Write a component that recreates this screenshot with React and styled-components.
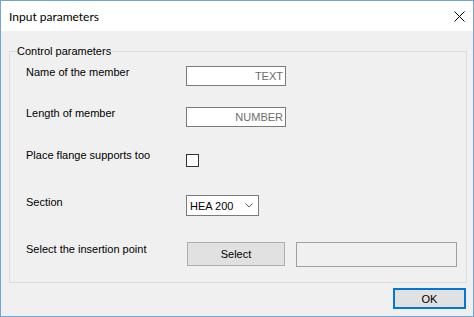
import React from "react";
import styled, { createGlobalStyle } from "styled-components";

const Global = createGlobalStyle`
  html, body { margin: 0; padding: 0; background: #ffffff; }
  body { font-family: "Liberation Sans", Arial, sans-serif; font-size: 11px; color: #000; }
  * { box-sizing: border-box; }
`;

const Window = styled.div`
  width: 474px;
  height: 317px;
  border: 1px solid #6ea6dc;
  background: #f0f0f0;
  display: flex;
  flex-direction: column;
`;

const TitleBar = styled.div`
  height: 30px;
  flex: none;
  background: #ffffff;
  display: flex;
  align-items: center;
  justify-content: space-between;
  padding: 0 8px 0 8px;
`;

const Title = styled.span`
  font-family: Lato, "Open Sans", sans-serif;
  font-size: 12px;
  color: #000;
`;

const CloseIcon = styled.svg`
  width: 11px;
  height: 11px;
  display: block;
`;

const Body = styled.div`
  flex: 1;
  display: flex;
  flex-direction: column;
  padding: 14px 6px 0 8px;
`;

const Group = styled.fieldset`
  margin: 0;
  padding: 0 6px 15px 7px;
  border: 1px solid #dcdcdc;
  min-width: 0;
`;

const Legend = styled.legend`
  padding: 0;
  font-size: 11px;
  line-height: 13px;
  color: #000;
`;

const FormGrid = styled.div`
  display: grid;
  grid-template-columns: 160px 1fr;
  grid-template-rows: 41px 42px 46px 47px 25px;
  align-items: start;
  margin: 8px 0 0 9px;
`;

const Label = styled.div`
  line-height: 13px;
  white-space: nowrap;
  margin-top: ${(p) => p.$offset || 0}px;
`;

const Cell = styled.div`
  display: flex;
  align-items: flex-start;
  gap: 11px;
`;

const TextBox = styled.input`
  width: 100px;
  height: 20px;
  border: 1px solid #7a7a7a;
  background: #ffffff;
  padding: 0 2px 0 2px;
  text-align: right;
  font-family: "Liberation Sans", Arial, sans-serif;
  font-size: 11px;
  color: #6d6d6d;
  outline: none;
  margin: 0;
`;

const CheckBox = styled.span`
  display: block;
  width: 13px;
  height: 13px;
  border: 1px solid #333333;
  background: #ffffff;
  margin-top: 5px;
`;

const Combo = styled.div`
  width: 73px;
  height: 21px;
  border: 1px solid #7a7a7a;
  background: #ffffff;
  display: flex;
  align-items: center;
  justify-content: space-between;
  padding: 0 5px 0 3px;
  font-size: 11px;
  color: #000;
`;

const Chevron = styled.svg`
  width: 8px;
  height: 5px;
  display: block;
`;

const Button = styled.button`
  width: ${(p) => p.$w}px;
  height: ${(p) => p.$h}px;
  margin: 0 0 0 ${(p) => p.$ml || 0}px;
  padding: 0;
  background: #e1e1e1;
  border: ${(p) => (p.$default ? "2px solid #0078d7" : "1px solid #adadad")};
  font-family: "Liberation Sans", Arial, sans-serif;
  font-size: 11px;
  color: #000;
  display: flex;
  align-items: center;
  justify-content: center;
`;

const ReadOnlyField = styled.div`
  width: 161px;
  height: 25px;
  border: 1px solid #a0a0a0;
  background: #f0f0f0;
`;

const Footer = styled.div`
  display: flex;
  justify-content: flex-end;
  padding: 5px 1px 0 0;
`;

export default function App() {
  return (
    <>
      <Global />
      <Window>
        <TitleBar>
          <Title>Input parameters</Title>
          <CloseIcon viewBox="0 0 11 11">
            <path d="M0.5 0.5 L10.5 10.5 M10.5 0.5 L0.5 10.5" stroke="#000" strokeWidth="1" fill="none" />
          </CloseIcon>
        </TitleBar>
        <Body>
          <Group>
            <Legend>Control parameters</Legend>
            <FormGrid>
              <Label>Name of the member</Label>
              <Cell>
                <TextBox readOnly value="TEXT" />
              </Cell>
              <Label>Length of member</Label>
              <Cell>
                <TextBox readOnly value="NUMBER" />
              </Cell>
              <Label>Place flange supports too</Label>
              <Cell>
                <CheckBox />
              </Cell>
              <Label $offset={1}>Section</Label>
              <Cell>
                <Combo>
                  <span>HEA 200</span>
                  <Chevron viewBox="0 0 8 5">
                    <path d="M0.5 0.5 L4 4 L7.5 0.5" stroke="#606060" strokeWidth="1" fill="none" />
                  </Chevron>
                </Combo>
              </Cell>
              <Label $offset={1}>Select the insertion point</Label>
              <Cell>
                <Button $w={98} $h={24} $ml={1}>Select</Button>
                <ReadOnlyField />
              </Cell>
            </FormGrid>
          </Group>
          <Footer>
            <Button $w={73} $h={21} $default>OK</Button>
          </Footer>
        </Body>
      </Window>
    </>
  );
}
